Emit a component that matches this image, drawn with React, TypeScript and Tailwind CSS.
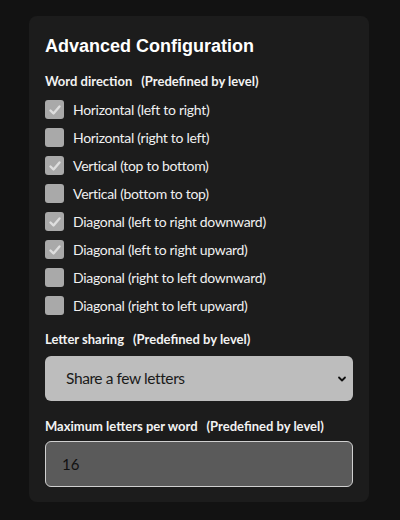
import React, { useState } from 'react';

const directions = [
  { label: 'Horizontal (left to right)', checked: true },
  { label: 'Horizontal (right to left)', checked: false },
  { label: 'Vertical (top to bottom)', checked: true },
  { label: 'Vertical (bottom to top)', checked: false },
  { label: 'Diagonal (left to right downward)', checked: true },
  { label: 'Diagonal (left to right upward)', checked: true },
  { label: 'Diagonal (right to left downward)', checked: false },
  { label: 'Diagonal (right to left upward)', checked: false },
];

const font = "font-['Lato','Liberation_Sans',sans-serif]";

// Disabled checkbox, drawn by hand so it looks the same everywhere
const Box = ({ checked }: { checked: boolean }) => (
  <span className="w-[19px] h-[19px] rounded-[3px] bg-[#a9a9a9] flex items-center justify-center shrink-0">
    {checked && (
      <svg width="14" height="14" viewBox="0 0 14 14" fill="none">
        <path d="M2.5 7.5 L5.5 10.5 L11.5 3.5" stroke="#dedede" strokeWidth="2.4" strokeLinecap="round" strokeLinejoin="round" />
      </svg>
    )}
  </span>
);

const Label = ({ title }: { title: string }) => (
  <p className={`${font} text-[13px] font-bold text-[#f2f2f2] leading-none`}>
    {title}
    <span className="ml-[9px]">(Predefined by level)</span>
  </p>
);

export default function App() {
  const [sharing] = useState('few');

  return (
    <div className="w-[400px] h-[520px] bg-[#121212] pt-4 pl-[29px]">
      <div className="w-[340px] h-[486px] bg-[#1c1c1c] rounded-[8px] pl-4 pr-4 pt-[21px]">
        <h2 className="font-['Liberation_Sans',Arial,sans-serif] font-bold text-[18px] text-white leading-none">
          Advanced Configuration
        </h2>

        <div className="mt-[20px]">
          <Label title="Word direction" />
        </div>

        <div className="mt-[12px] flex flex-col gap-[9px]">
          {directions.map((d) => (
            <label key={d.label} className="flex items-center gap-[9px] h-[19px]">
              <Box checked={d.checked} />
              <span className={`${font} text-[14px] tracking-[-0.3px] text-[#f0f0f0]`}>{d.label}</span>
            </label>
          ))}
        </div>

        <div className="mt-[18px]">
          <Label title="Letter sharing" />
        </div>

        <div className="relative mt-[10px] w-[308px] h-[45px] rounded-[6px] bg-[#bdbdbd] flex items-center pl-[21px]">
          <span className={`${font} text-[15.5px] tracking-[-0.4px] text-[#1a1a1a]`}>
            {sharing === 'few' ? 'Share a few letters' : ''}
          </span>
          <svg className="absolute right-[6px] top-1/2 -translate-y-1/2" width="10" height="10" viewBox="0 0 10 10" fill="none">
            <path d="M2 3.5 L5 6.5 L8 3.5" stroke="#111" strokeWidth="1.8" strokeLinecap="round" strokeLinejoin="round" />
          </svg>
        </div>

        <div className="mt-[19px]">
          <Label title="Maximum letters per word" />
        </div>

        <div className="mt-[8px] w-[308px] h-[46px] rounded-[6px] bg-[#5a5a5a] border border-[#d0d0d0] flex items-center pl-[16px]">
          <span className={`${font} text-[15px] text-[#111]`}>16</span>
        </div>
      </div>
    </div>
  );
}
